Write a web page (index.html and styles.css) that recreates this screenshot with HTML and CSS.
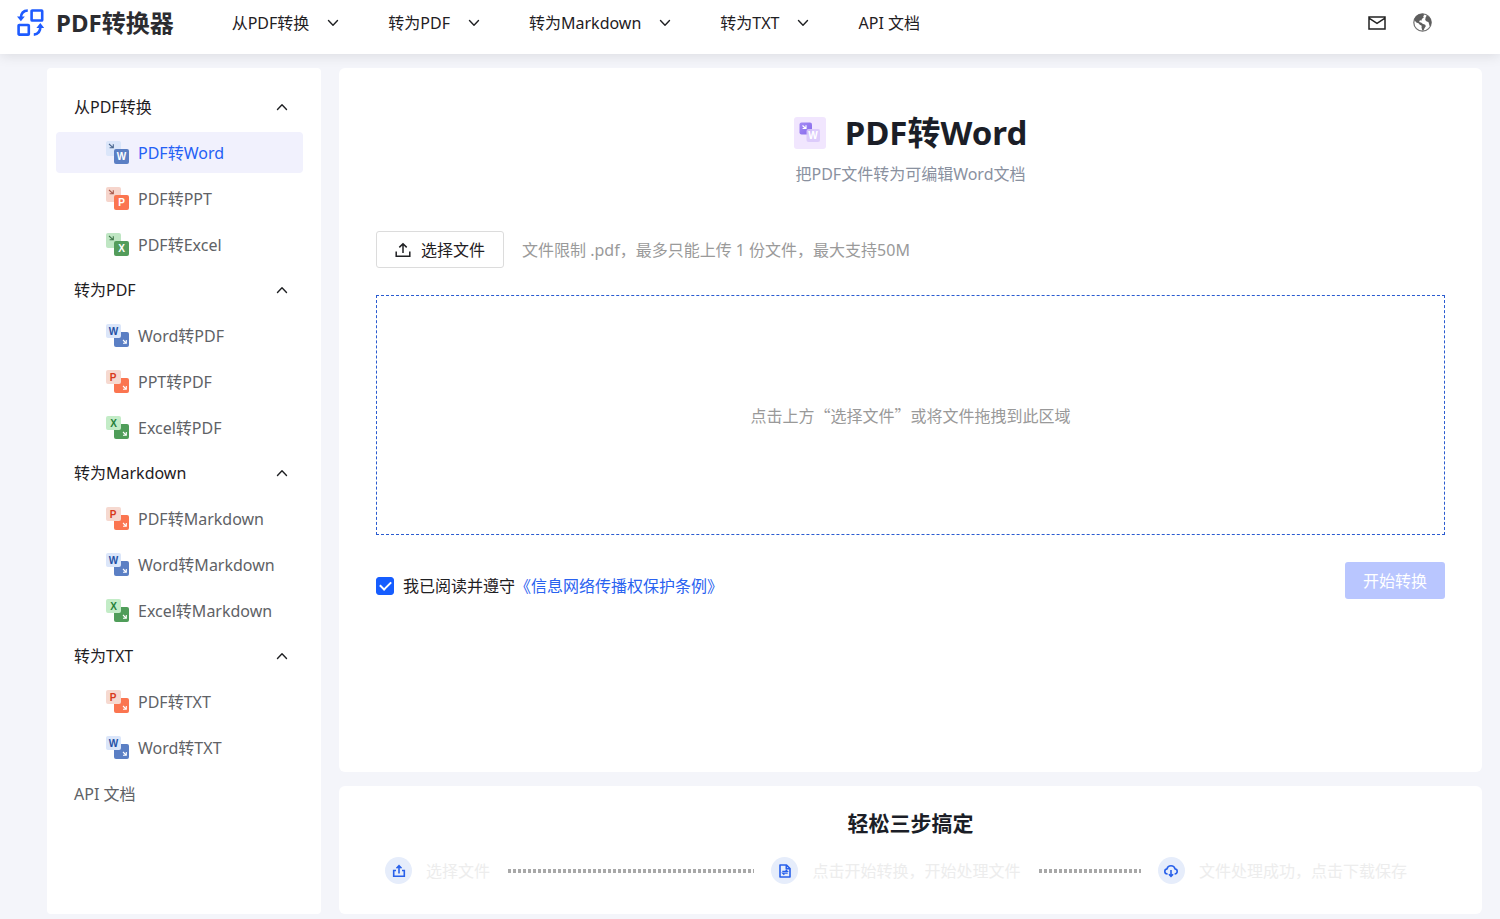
FILE: index.html
```html
<!DOCTYPE html>
<html lang="zh-CN">
<head>
<meta charset="utf-8">
<meta name="viewport" content="width=device-width, initial-scale=1">
<title>PDF转换器</title>
<link rel="stylesheet" href="styles.css">
</head>
<body>
<svg class="sprite" aria-hidden="true">
  <symbol id="chevron" viewBox="0 0 12 12"><path d="M1.5 3.5 6 8.2l4.5-4.700" fill="none" stroke="currentColor" stroke-width="1.4" stroke-linecap="round" stroke-linejoin="round"/></symbol>
  <symbol id="upload" viewBox="0 0 16 16"><path d="M8 11V2M4.3 5.4 8 1.7l3.700 3.700M1.2 9.500v4.700h13.600V9.500" fill="none" stroke="currentColor" stroke-width="1.5"/></symbol>
  <symbol id="from-word" viewBox="0 0 23 23"><rect width="15" height="15" rx="2" fill="#dbe6fa"/><path d="M3 3l4 3.6M7.3 3.2v3.6H3.6" fill="none" stroke="#4a6790" stroke-width="1.1"/><rect x="8" y="8" width="15" height="15" rx="2" fill="#5b7fc4"/><text class="glyph" x="15.5" y="19" fill="#fff">W</text></symbol>
  <symbol id="from-ppt" viewBox="0 0 23 23"><rect width="15" height="15" rx="2" fill="#f6d5cc"/><path d="M3 3l4 3.6M7.3 3.2v3.6H3.6" fill="none" stroke="#a8584a" stroke-width="1.1"/><rect x="8" y="8" width="15" height="15" rx="2" fill="#fb7550"/><text class="glyph" x="15.5" y="19" fill="#fff">P</text></symbol>
  <symbol id="from-excel" viewBox="0 0 23 23"><rect width="15" height="15" rx="2" fill="#bfe6c3"/><path d="M3 3l4 3.6M7.3 3.2v3.6H3.6" fill="none" stroke="#3e7548" stroke-width="1.1"/><rect x="8" y="8" width="15" height="15" rx="2" fill="#539c5b"/><text class="glyph" x="15.5" y="19" fill="#fff">X</text></symbol>
  <symbol id="to-word" viewBox="0 0 23 23"><rect x="8" y="8" width="15" height="15" rx="2" fill="#5b7fc4"/><rect width="15" height="14" rx="2" fill="#dbe6fa"/><text class="glyph" x="7.5" y="10.500" fill="#2450a4">W</text><path d="M17 16l3 3M20.3 16v3.3H17" fill="none" stroke="#fff" stroke-width="1.1"/></symbol>
  <symbol id="to-ppt" viewBox="0 0 23 23"><rect x="8" y="8" width="15" height="15" rx="2" fill="#fb7550"/><rect width="15" height="14" rx="2" fill="#f6d9d0"/><text class="glyph" x="7" y="10.500" fill="#d8391c">P</text><path d="M17 16l3 3M20.3 16v3.3H17" fill="none" stroke="#fff" stroke-width="1.1"/></symbol>
  <symbol id="to-excel" viewBox="0 0 23 23"><rect x="8" y="8" width="15" height="15" rx="2" fill="#4f9d59"/><rect width="15" height="14" rx="2" fill="#c3ecc7"/><text class="glyph" x="7.5" y="10.500" fill="#27803a">X</text><path d="M17 16l3 3M20.3 16v3.3H17" fill="none" stroke="#fff" stroke-width="1.1"/></symbol>
</svg>

<header class="topbar">
  <a class="brand" href="#">
    <svg class="brand-icon" viewBox="0 0 27 27" aria-hidden="true">
      <g fill="none" stroke="#1e5bff" stroke-width="2.600"><rect x="14.600" y="1.500" width="10.600" height="10" rx=".6"/><rect x="1.600" y="16" width="10.200" height="9.600" rx=".6"/><path d="M10.800 1.500C6.500 1.600 4 4.300 3.800 9M16.800 25.600c4.300-.2 6.600-3 6.600-8"/></g>
      <path d="M0 7.600h7.800L3.900 12.200zM19.400 18.900h7.800l-3.900-4.800z" fill="#1e5bff"/>
    </svg>
    <span>PDF转换器</span>
  </a>
  <nav class="nav">
    <button type="button">从PDF转换<svg class="chevron"><use href="#chevron"/></svg></button>
    <button type="button">转为PDF<svg class="chevron"><use href="#chevron"/></svg></button>
    <button type="button">转为Markdown<svg class="chevron"><use href="#chevron"/></svg></button>
    <button type="button">转为TXT<svg class="chevron"><use href="#chevron"/></svg></button>
    <a href="#">API 文档</a>
  </nav>
  <div class="tools">
    <button type="button" aria-label="邮件"><svg class="mail" viewBox="0 0 18 14"><path d="M1 1h16v12H1zM1 2.200l8 5.200 8-5.200" fill="none" stroke="#222" stroke-width="1.500"/></svg></button>
    <button type="button" aria-label="语言"><svg class="globe" viewBox="0 0 19 19"><circle cx="9.500" cy="9.500" r="8.700" fill="#fff" stroke="#707070" stroke-width="1.200"/><path d="M10.500.8C7 .4 3.300 2 1.800 5L1.500 7.200l1.800 2.300 2.200.7 1.300 1.600 1.900.9-.2 1.900.8 2.900 1.300-.2 1-2.300 1.200-1.700-.6-1.500-2.600-1.100-1.500-1.100-1.500-.3-.4-1.300 1.200-.8 1 .5.500-1.600 2-1.800-.9-1.200 1.200-.6zM13.800 2.400l-1.200 2.200-.4 2.300 1.500 1.700 1.700.3.700 2 .3 1.900 1 .3c.9-1.700 1.100-3.500.7-5.500-.6-2.300-2-4.200-4.300-5.200z" fill="#5e5e5e"/></svg></button>
  </div>
</header>

<div class="layout">
  <aside class="sidebar">
    <button class="group" type="button" aria-expanded="true">从PDF转换<svg class="chevron up"><use href="#chevron"/></svg></button>
    <a class="item active" href="#"><svg class="file-icon"><use href="#from-word"/></svg>PDF转Word</a>
    <a class="item" href="#"><svg class="file-icon"><use href="#from-ppt"/></svg>PDF转PPT</a>
    <a class="item" href="#"><svg class="file-icon"><use href="#from-excel"/></svg>PDF转Excel</a>
    <button class="group" type="button" aria-expanded="true">转为PDF<svg class="chevron up"><use href="#chevron"/></svg></button>
    <a class="item" href="#"><svg class="file-icon"><use href="#to-word"/></svg>Word转PDF</a>
    <a class="item" href="#"><svg class="file-icon"><use href="#to-ppt"/></svg>PPT转PDF</a>
    <a class="item" href="#"><svg class="file-icon"><use href="#to-excel"/></svg>Excel转PDF</a>
    <button class="group" type="button" aria-expanded="true">转为Markdown<svg class="chevron up"><use href="#chevron"/></svg></button>
    <a class="item" href="#"><svg class="file-icon"><use href="#to-ppt"/></svg>PDF转Markdown</a>
    <a class="item" href="#"><svg class="file-icon"><use href="#to-word"/></svg>Word转Markdown</a>
    <a class="item" href="#"><svg class="file-icon"><use href="#to-excel"/></svg>Excel转Markdown</a>
    <button class="group" type="button" aria-expanded="true">转为TXT<svg class="chevron up"><use href="#chevron"/></svg></button>
    <a class="item" href="#"><svg class="file-icon"><use href="#to-ppt"/></svg>PDF转TXT</a>
    <a class="item" href="#"><svg class="file-icon"><use href="#to-word"/></svg>Word转TXT</a>
    <a class="item plain" href="#">API 文档</a>
  </aside>

  <main class="main">
    <section class="panel converter">
      <div class="title-row">
        <svg class="title-icon" viewBox="0 0 32 32" aria-hidden="true"><defs><linearGradient id="tile" x1="0" y1="0" x2="1" y2="1"><stop offset="0" stop-color="#a58bf5"/><stop offset="1" stop-color="#8468ea"/></linearGradient></defs><rect width="32" height="32" rx="3" fill="#f1e6fe"/><rect x="5.500" y="5.500" width="12.500" height="12" rx="2" fill="url(#tile)"/><path d="M8.500 8.500l3 2.800M12 8.300v3.200H8.600" fill="none" stroke="#fff" stroke-width="1.200"/><rect x="12.500" y="12" width="13.500" height="13" rx="2" fill="#d9c8fb" opacity=".9"/><text class="glyph" x="19" y="22" fill="#fff">W</text></svg>
        <h1>PDF转Word</h1>
      </div>
      <p class="subtitle">把PDF文件转为可编辑Word文档</p>
      <div class="upload-row">
        <button class="choose" type="button"><svg class="upload-icon"><use href="#upload"/></svg>选择文件</button>
        <span class="hint">文件限制 .pdf，最多只能上传 1 份文件，最大支持50M</span>
      </div>
      <div class="dropzone">点击上方“选择文件”或将文件拖拽到此区域</div>
      <div class="submit-row">
        <div class="agree">
          <input type="checkbox" id="agree" checked>
          <label for="agree">我已阅读并遵守</label><a href="#">《信息网络传播权保护条例》</a>
        </div>
        <button class="start" type="button" disabled>开始转换</button>
      </div>
    </section>

    <section class="panel guide">
      <h2>轻松三步搞定</h2>
      <ol class="steps">
        <li class="step"><span class="badge"><svg viewBox="0 0 14 14"><path d="M7 9.500V2M4.500 4.200 7 1.700l2.500 2.500M4 6.500H1.700v5.800h10.600V6.500H10" fill="none" stroke="currentColor" stroke-width="1.600"/></svg></span><span>选择文件</span><i class="dots"></i></li>
        <li class="step"><span class="badge"><svg viewBox="0 0 14 14"><path d="M2 1h6.500L12 4.500V13H2zM8.300 1v3.700H12" fill="none" stroke="currentColor" stroke-width="1.600" stroke-linejoin="round"/><path d="M4.300 7.400h5L7.700 5.800M9.700 9.100h-5l1.600 1.600" fill="none" stroke="currentColor" stroke-width="1.300"/></svg></span><span>点击开始转换，开始处理文件</span><i class="dots"></i></li>
        <li class="step"><span class="badge"><svg viewBox="0 0 14 14"><path d="M3.600 10C1.600 9.900.8 8.700.8 7.500c0-1.500 1-2.400 2.200-2.600C3.500 2.800 5 1.800 7 1.800s3.500 1.100 4 3.100c1.300.2 2.200 1.200 2.200 2.600 0 1.300-.9 2.400-2.600 2.500M7 6v6.500M4.900 10.300 7 12.400l2.100-2.100" fill="none" stroke="currentColor" stroke-width="1.600"/></svg></span><span>文件处理成功，点击下载保存</span></li>
      </ol>
    </section>
  </main>
</div>
</body>
</html>
```

FILE: styles.css
```css
* { box-sizing: border-box; }

body {
  margin: 0;
  min-height: 100vh;
  display: flex;
  flex-direction: column;
  background: #f4f5fa;
  color: #1f2023;
  font: 16px/24px "Noto Sans", "Noto Sans CJK SC", sans-serif;
}

button { font: inherit; color: inherit; background: none; border: 0; padding: 0; cursor: pointer; }
a { color: inherit; text-decoration: none; }
h1, h2, p, ol { margin: 0; padding: 0; }
svg { display: block; flex: none; }

.sprite { display: none; }
.glyph { font: bold 10px "Liberation Sans", sans-serif; text-anchor: middle; }
.chevron { width: 12px; height: 12px; }
.chevron.up { transform: rotate(180deg); }

.topbar {
  height: 54px;
  display: flex;
  align-items: flex-start;
  padding: 5px 68px 0 17px;
  background: #fff;
  box-shadow: 0 2px 12px rgba(0, 0, 0, .1);
  z-index: 1;
}
.brand, .nav, .nav button, .tools { display: flex; align-items: center; height: 35px; }
.brand { gap: 12px; font-size: 24px; font-weight: 700; color: #2b2c30; }
.brand-icon { width: 27px; height: 27px; }
.nav { gap: 49px; margin-left: 58px; }
.nav button { gap: 18px; }
.tools { gap: 27px; margin-left: auto; }
.mail { width: 18px; height: 14px; }
.globe { width: 19px; height: 19px; }

.layout { flex: 1; display: flex; gap: 18px; padding: 14px 18px 5px 47px; }

.sidebar {
  flex: 0 0 274px;
  display: flex;
  flex-direction: column;
  gap: 5px;
  padding: 19px 18px 19px 9px;
  background: #fff;
  border-radius: 4px;
}
.group { display: flex; align-items: center; justify-content: space-between; height: 40px; padding: 0 15px 0 18px; }
.item { display: flex; align-items: center; gap: 9px; height: 41px; padding-left: 50px; border-radius: 4px; color: #606266; }
.item.active { background: #f1f1fd; color: #2460f5; }
.item.plain { padding-left: 18px; }
.file-icon { width: 23px; height: 23px; }

.main { flex: 1; min-width: 0; display: flex; flex-direction: column; gap: 14px; }
.panel { background: #fff; border-radius: 6px; }

.converter { flex: 1; padding: 43px 37px; }
.title-row { display: flex; justify-content: center; align-items: center; gap: 19px; }
.title-icon { width: 32px; height: 32px; }
h1 { font-size: 33px; line-height: 44px; color: #1b1e27; }
.subtitle { margin-top: 7px; text-align: center; color: #8a919f; }
.upload-row { display: flex; align-items: center; gap: 18px; margin-top: 45px; }
.choose { display: flex; align-items: center; gap: 10px; height: 37px; padding: 0 18px; border: 1px solid #dcdcdc; border-radius: 3px; }
.upload-icon { width: 16px; height: 16px; }
.hint { color: #9a9a9a; }
.dropzone {
  display: flex;
  align-items: center;
  justify-content: center;
  height: 240px;
  margin-top: 27px;
  border: 1px dashed #2a5bd0;
  color: #999;
  font-family: "Noto Sans CJK SC", sans-serif;
}
.submit-row { display: flex; justify-content: space-between; align-items: flex-start; margin-top: 27px; }
.agree { display: flex; align-items: center; padding-top: 12px; }
.agree input {
  appearance: none;
  display: grid;
  place-items: center;
  width: 18px;
  height: 18px;
  margin: 0 9px 0 0;
  border: 1px solid #165dff;
  border-radius: 3px;
}
.agree input:checked { background: #165dff; }
.agree input:checked::before {
  content: "";
  width: 9px;
  height: 5px;
  margin-bottom: 3px;
  border: solid #fff;
  border-width: 0 0 2px 2px;
  transform: rotate(-45deg);
}
.agree a { color: #2a62f0; }
.start { height: 37px; padding: 0 18px; border-radius: 3px; background: #b9c6ff; color: #fff; }

.guide { height: 128px; padding: 22px 75px 0 46px; }
h2 { text-align: center; font-size: 21px; line-height: 30px; margin-right: -29px; color: #1b1e27; }
.steps { display: grid; grid-template-columns: 1fr 1fr auto; margin-top: 19px; list-style: none; color: #ededed; }
.step { display: flex; align-items: center; white-space: nowrap; }
.badge { display: grid; place-items: center; width: 27px; height: 27px; margin-right: 14px; border-radius: 50%; background: #e6edfb; color: #2860ea; }
.badge svg { width: 14px; height: 14px; }
.dots { flex: 1; height: 4px; margin: 0 17px 0 18px; background: repeating-linear-gradient(90deg, #a8a8a8 0 3px, transparent 3px 5px); }
```
